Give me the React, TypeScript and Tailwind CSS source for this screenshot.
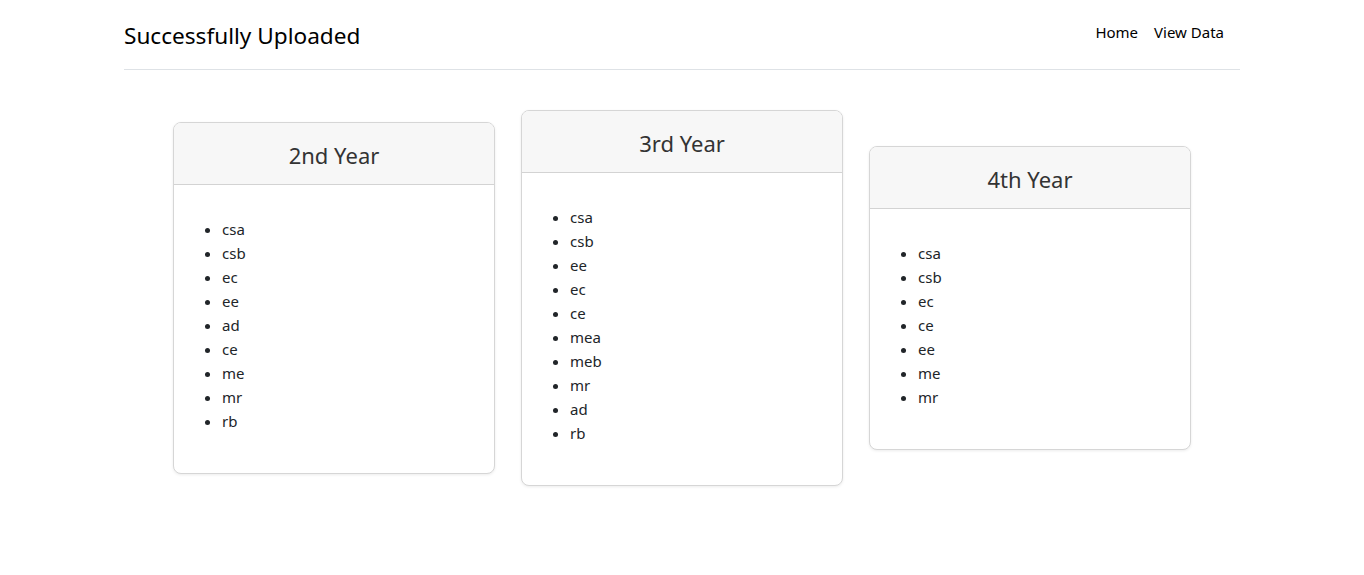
import React from "react";

const years = [
  { title: "2nd Year", items: ["csa", "csb", "ec", "ee", "ad", "ce", "me", "mr", "rb"] },
  { title: "3rd Year", items: ["csa", "csb", "ee", "ec", "ce", "mea", "meb", "mr", "ad", "rb"] },
  { title: "4th Year", items: ["csa", "csb", "ec", "ce", "ee", "me", "mr"] },
];

export default function App() {
  return (
    <div
      className="min-h-screen bg-white text-[#212529]"
      style={{ fontFamily: '"Noto Sans", "Open Sans", sans-serif' }}
    >
      <div className="mx-auto w-[1140px] px-3">
        <header className="h-[70px] flex items-center justify-between border-b border-[#dee2e6]">
          <span className="mt-[2px] text-[22.6px] leading-9 text-black">Successfully Uploaded</span>
          <nav className="mb-[4px] flex gap-4 mr-4 text-[15px] text-black">
            <a href="#">Home</a>
            <a href="#">View Data</a>
          </nav>
        </header>
      </div>

      <main className="flex items-center justify-center gap-[26px] py-10">
        {years.map((y) => (
          <div
            key={y.title}
            className="w-[322px] rounded-lg border border-[#d6d6d6] bg-white shadow-[0_1px_3px_rgba(0,0,0,0.08)] overflow-hidden"
          >
            <div className="h-[62px] pt-1 flex items-center justify-center bg-[#f7f7f7] border-b border-[#d3d3d3]">
              <h2 className="text-[22px] text-[#333]">{y.title}</h2>
            </div>
            <div className="px-4 pt-8 pb-10">
              <ul className="list-disc pl-8 text-[15px] leading-6 text-[#212529]">
                {y.items.map((it, i) => (
                  <li key={i}>{it}</li>
                ))}
              </ul>
            </div>
          </div>
        ))}
      </main>
    </div>
  );
}
